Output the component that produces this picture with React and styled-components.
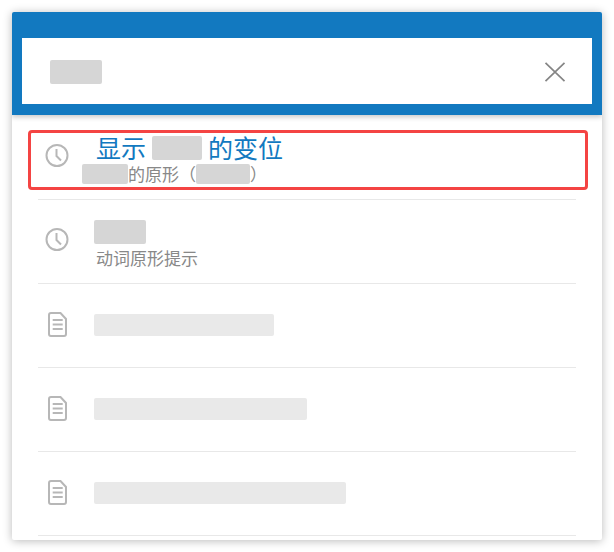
import React from "react";
import styled, { createGlobalStyle } from "styled-components";

const Global = createGlobalStyle`
  html, body { margin: 0; padding: 0; background: #fff; }
  body { font-family: "Liberation Sans", "Noto Sans CJK SC", sans-serif; }
`;
const Panel = styled.div`
  width: 590px; height: 528px; margin: 12px;
  background: #fff; border-radius: 2px; overflow: hidden;
  box-shadow: 0 1px 10px rgba(0,0,0,.28);
  display: flex; flex-direction: column;
`;
const Header = styled.header`
  background: #1279c0; height: 103px; flex: none;
  padding: 26px 10px 11px; box-sizing: border-box;
  box-shadow: 0 2px 5px rgba(0,0,0,.22);
  position: relative;
`;
const SearchBox = styled.div`
  height: 66px; background: #fff;
  display: flex; align-items: center; justify-content: space-between;
  padding: 1px 26px 0 28px; box-sizing: border-box;
`;
const Redacted = styled.span`
  display: inline-block; flex: none; vertical-align: top;
  width: ${p => p.$w}px; height: ${p => p.$h}px;
  background: #d6d6d6; border-radius: 2px;
`;
const List = styled.div`
  padding: 1px 26px 0; display: flex; flex-direction: column;
`;
const Row = styled.div`
  position: relative; box-sizing: border-box; height: 84px;
  border-bottom: 1px solid #e8e8e8;
  display: grid; grid-template-columns: 56px 1fr; align-items: start;
  padding-top: ${p => p.$top}px;
`;
const Highlight = styled.div`
  position: absolute; left: -10px; right: -12px; top: 14px; height: 60px;
  box-sizing: border-box; border: 3px solid #f44443; border-radius: 4px;
`;
const IconCell = styled.div`
  display: flex; justify-content: center; padding-right: 18px; margin-top: ${p => p.$top}px;
  svg { display: block; }
`;
const Title = styled.div`
  display: flex; align-items: flex-start; gap: 6px; height: 24px; margin-left: 2px;
  color: #1279c0; font-size: 25px; line-height: 26px; white-space: nowrap;
`;
const Sub = styled.div`
  display: flex; align-items: flex-start; height: 20px; margin-top: 4px; margin-left: ${p => p.$left}px;
  color: #888; font-size: 17px; line-height: 24px; white-space: nowrap;
`;
const Bar = styled.div`
  height: 22px; width: ${p => p.$w}px; background: #e9e9e9; border-radius: 2px;
`;

const Close = () => (
  <svg width="22" height="20" viewBox="0 0 22 20" fill="none" stroke="#858585" strokeWidth="1.7">
    <path d="M1.500 .8 20.500 19.200M20.500 .8 1.500 19.200" />
  </svg>
);
const Clock = () => (
  <svg width="24" height="24" viewBox="0 0 24 24" fill="none" stroke="#b7b7b7" strokeWidth="2">
    <circle cx="12" cy="12.500" r="10.500" />
    <path d="M11.500 6V13L16 17.500" />
  </svg>
);
const Doc = () => (
  <svg width="19" height="25" viewBox="0 0 19 25" fill="none" stroke="#b7b7b7" strokeWidth="2">
    <path d="M3 1H12.500L18 7V22Q18 24 16 24H3Q1 24 1 22V3Q1 1 3 1Z" />
    <path d="M4.700 8H14.700M4.700 12.500H14.700M4.700 17H14.700" />
  </svg>
);

export default function App() {
  return (
    <>
      <Global />
      <Panel>
        <Header>
          <SearchBox>
            <Redacted $w={52} $h={24} />
            <Close />
          </SearchBox>
        </Header>
        <List>
          <Row $top={20}>
            <Highlight />
            <IconCell $top={7}><Clock /></IconCell>
            <div>
              <Title>显示<Redacted $w={50} $h={24} />的变位</Title>
              <Sub $left={-12}><Redacted $w={46} $h={20} />的原形（<Redacted $w={54} $h={20} />）</Sub>
            </div>
          </Row>
          <Row $top={20}>
            <IconCell $top={7}><Clock /></IconCell>
            <div>
              <Redacted $w={52} $h={24} />
              <Sub $left={2}>动词原形提示</Sub>
            </div>
          </Row>
          {[180, 213, 252].map(w => (
            <Row key={w} $top={30}>
              <IconCell $top={-2}><Doc /></IconCell>
              <Bar $w={w} />
            </Row>
          ))}
        </List>
      </Panel>
    </>
  );
}
